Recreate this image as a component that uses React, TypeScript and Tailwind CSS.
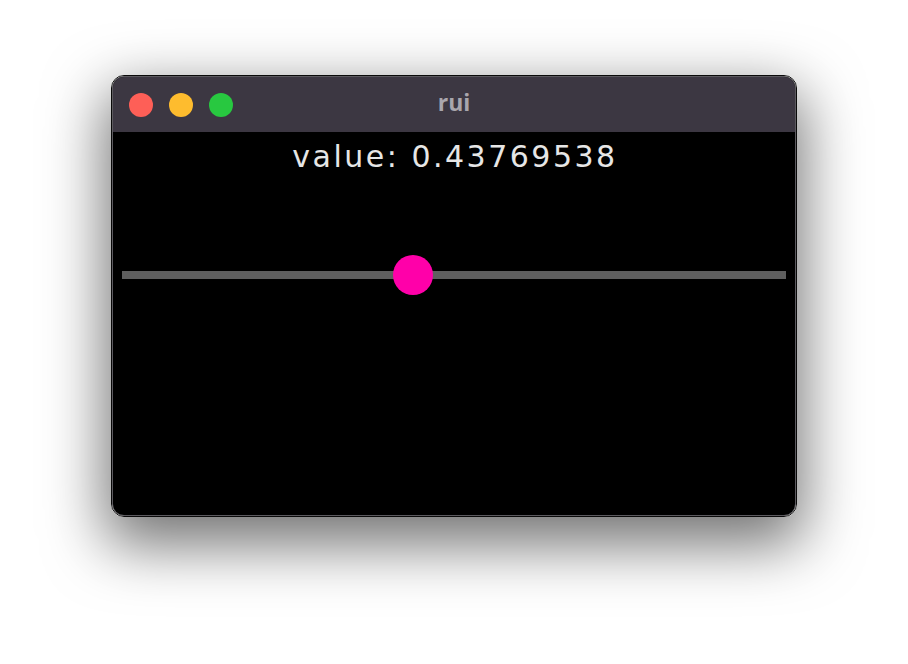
import { useState } from "react";

const TRACK_MIN = 0;
const TRACK_MAX = 1;

const TrafficLights = () => (
  <div className="flex items-center gap-4 pl-[16px]">
    <span className="w-6 h-6 rounded-full bg-[#fe5f57]" />
    <span className="w-6 h-6 rounded-full bg-[#febc2e]" />
    <span className="w-6 h-6 rounded-full bg-[#28c840]" />
  </div>
);

const Slider = ({ value }: { value: number }) => {
  const pct = ((value - TRACK_MIN) / (TRACK_MAX - TRACK_MIN)) * 100;
  return (
    <div className="relative h-10 mx-[9px] flex items-center">
      <div className="w-full h-2 bg-[#5f5f5f]" />
      <div
        className="absolute top-0 w-10 h-10 -ml-5 rounded-full bg-[#ff00a9]"
        style={{ left: `${pct}%` }}
      />
    </div>
  );
};

const App = () => {
  const [value] = useState(0.43769538);

  return (
    <div className="w-[908px] h-[664px] bg-white pt-[75px] overflow-hidden">
      <div className="mx-auto w-[686px] h-[442px] rounded-[13px] border border-[#0a0a0a] shadow-[0_22px_60px_6px_rgba(0,0,0,0.55)] overflow-hidden">
        <div className="h-full w-full rounded-[12px] border border-[#5c5a5f] overflow-hidden flex flex-col bg-black">
          <header className="relative h-[55px] shrink-0 bg-[#3c3742] flex items-center">
            <TrafficLights />
            <span
              className="absolute inset-0 flex items-center justify-center text-[23px] font-bold text-[#a9a6ad] pb-[5px]"
              style={{ fontFamily: '"Open Sans", "DejaVu Sans", sans-serif' }}
            >
              rui
            </span>
          </header>
          <main className="flex-1 flex flex-col">
            <p
              className="text-center text-[30px] leading-none tracking-[2.5px] text-[#e6e6e6] pt-[10px] pl-[2px]"
              style={{ fontFamily: '"DejaVu Sans", sans-serif' }}
            >
              value: {value}
            </p>
            <div className="mt-[83px]">
              <Slider value={value} />
            </div>
          </main>
        </div>
      </div>
    </div>
  );
};

export default App;
